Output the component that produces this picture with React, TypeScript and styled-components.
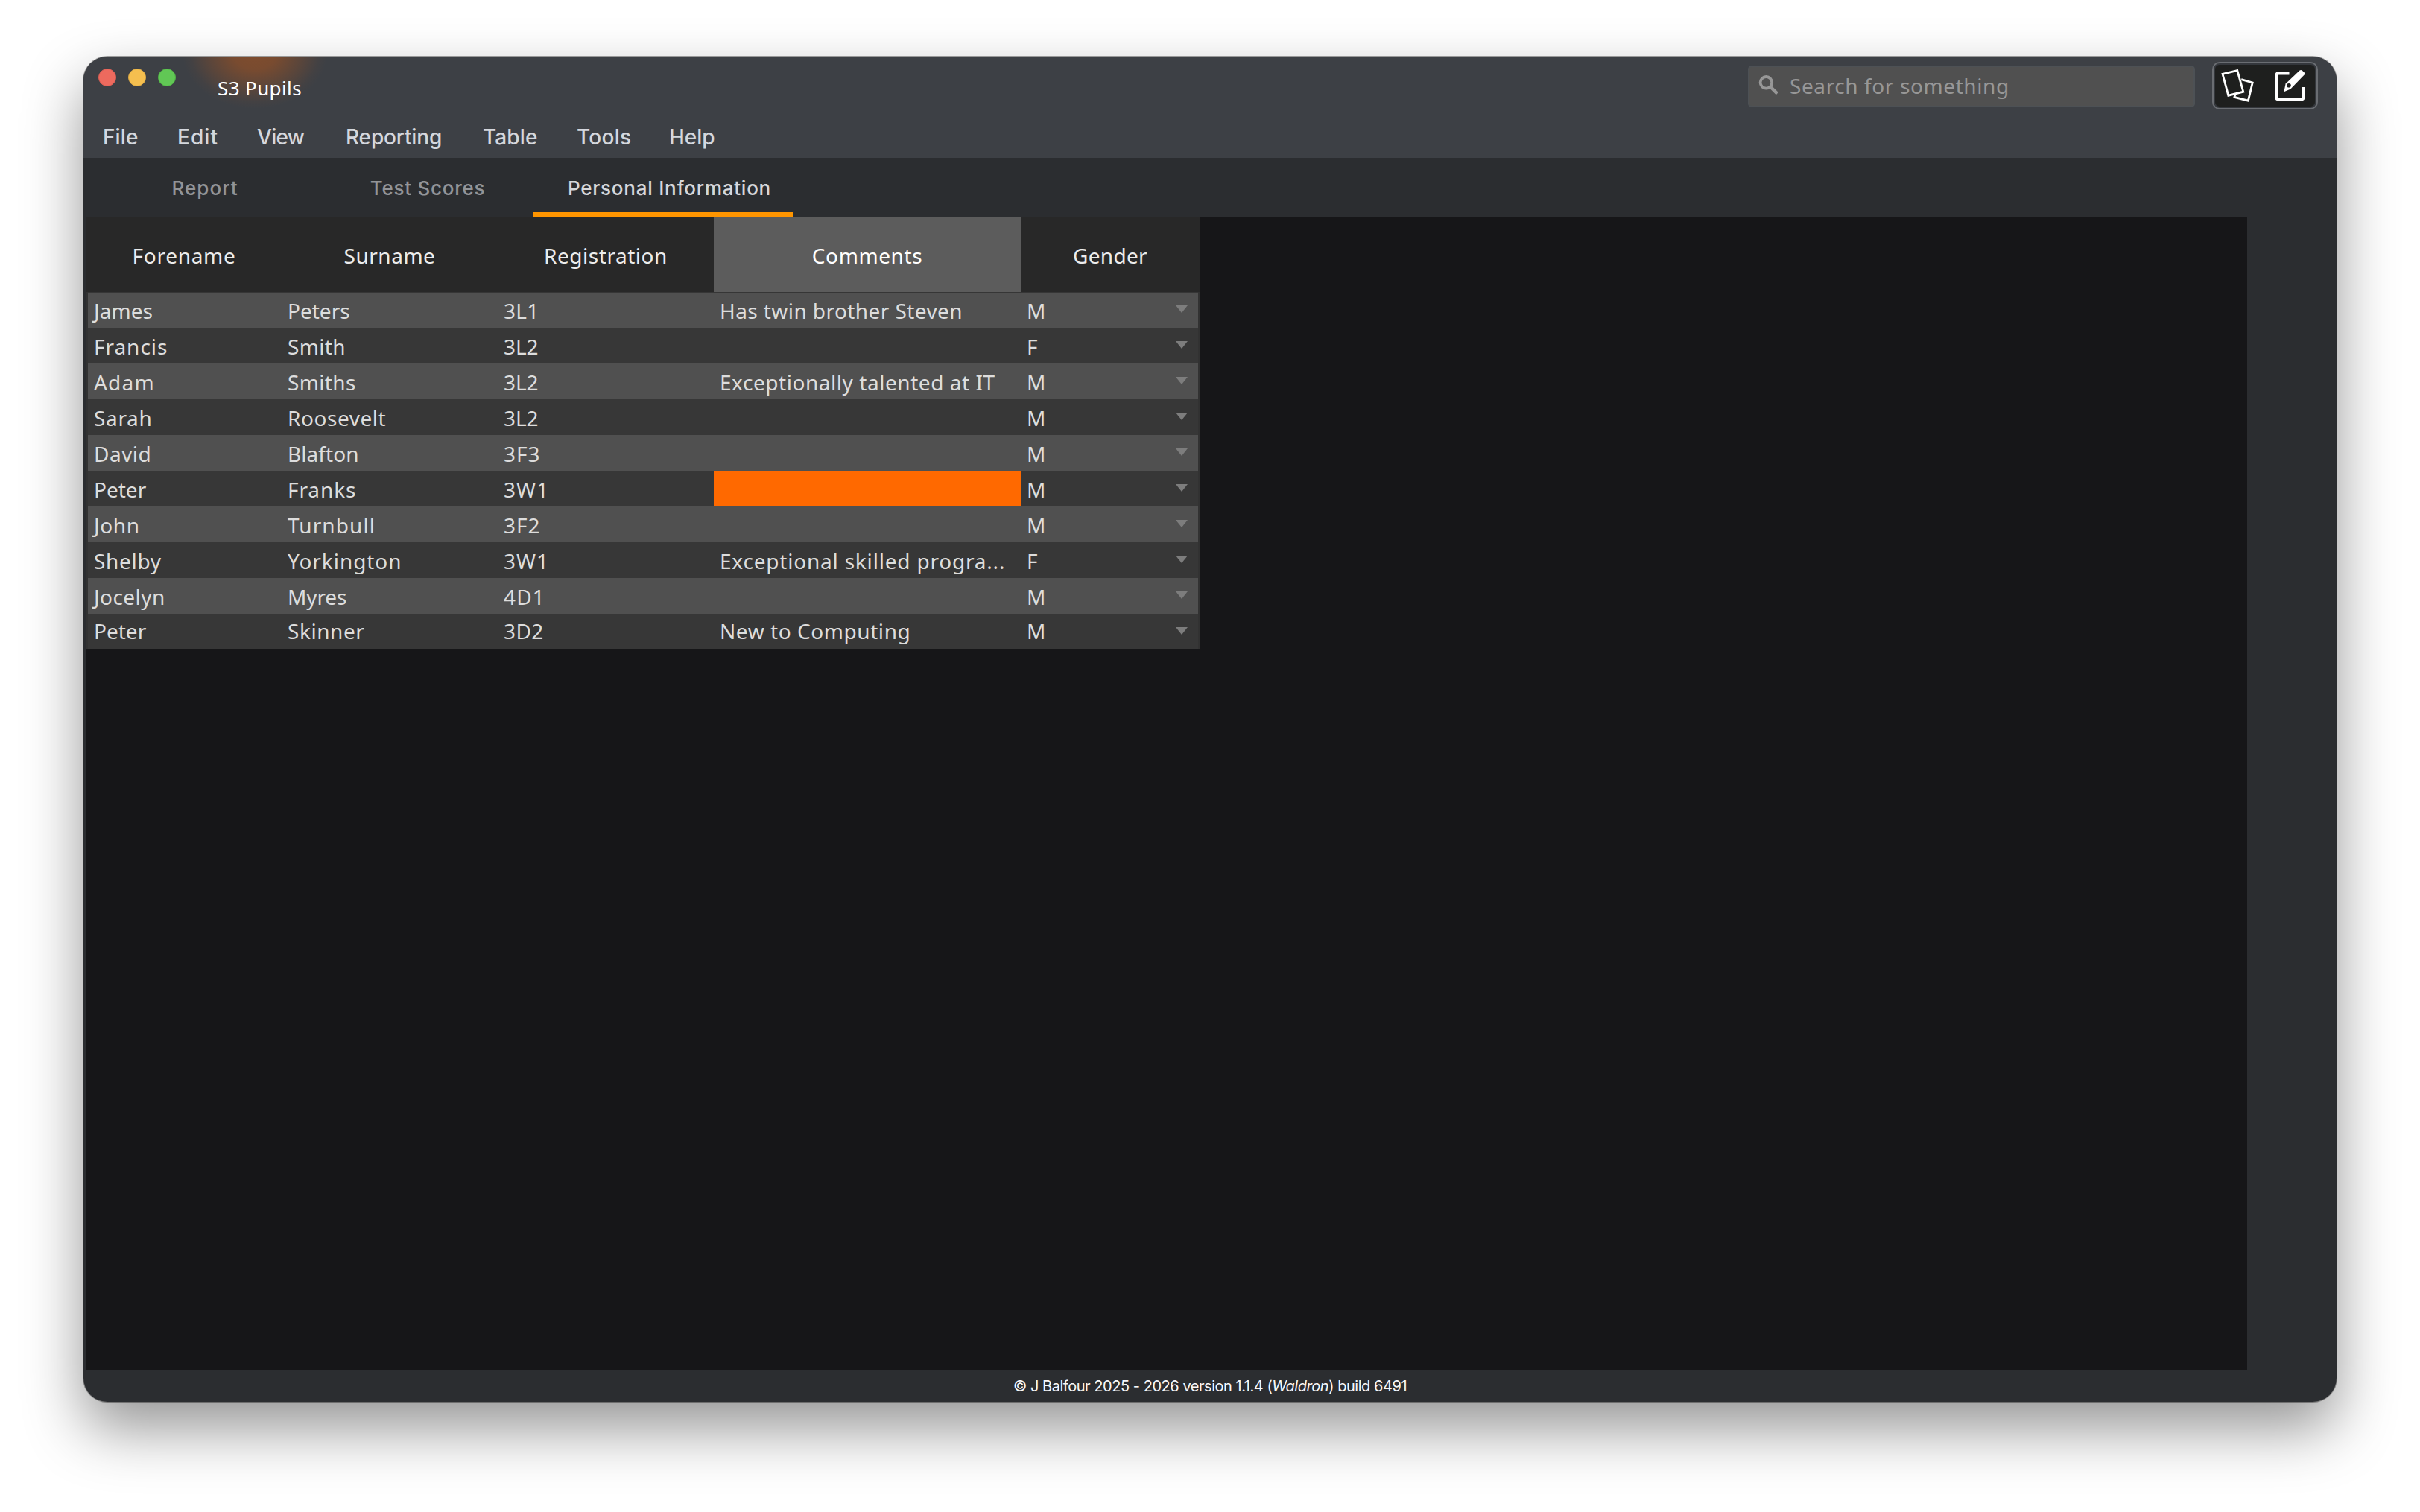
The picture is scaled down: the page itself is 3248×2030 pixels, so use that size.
import React from 'react';
import styled, { createGlobalStyle } from 'styled-components';

const humanist = '"Noto Sans", "Open Sans", sans-serif';
const grotesque = 'Inter, "Liberation Sans", sans-serif';

const GlobalStyle = createGlobalStyle`
  *, *::before, *::after { box-sizing: border-box; }
  body { margin: 0; background: #fff; }
`;

const Desktop = styled.main`
  width: 3248px;
  height: 2030px;
  padding: 76px 112px 148px;
  overflow: hidden;
  background: #fff;
`;

const Window = styled.section`
  display: flex;
  flex-direction: column;
  height: 1806px;
  overflow: hidden;
  border-radius: 32px;
  background: #2b2d30;
  box-shadow: 0 0 0 1px rgba(0, 0, 0, 0.35), 0 36px 80px rgba(0, 0, 0, 0.42);
`;

const Header = styled.header`
  flex: none;
  height: 136px;
  background: radial-gradient(
      ellipse 98px 76px at 230px -6px,
      rgba(255, 100, 0, 0.34) 0%,
      rgba(255, 100, 0, 0.31) 30%,
      rgba(255, 100, 0, 0.14) 66%,
      rgba(255, 100, 0, 0.03) 88%,
      rgba(255, 100, 0, 0) 100%
    ),
    #3d4045;
`;

const TitleBar = styled.div`
  display: flex;
  align-items: flex-start;
  height: 80px;
  padding: 0 25px 0 20px;
`;

const Lights = styled.div`
  display: flex;
  gap: 16px;
  padding-top: 16px;
`;

const Light = styled.span<{ $color: string; $edge: string }>`
  width: 24px;
  height: 24px;
  border: 1px solid ${(p) => p.$edge};
  border-radius: 50%;
  background: ${(p) => p.$color};
`;

const Title = styled.h1`
  margin: 24px auto 0 56px;
  font: 400 26px/36px ${humanist};
  letter-spacing: 0.38px;
  white-space: nowrap;
  color: #fff;
`;

const Search = styled.div`
  display: flex;
  align-items: flex-start;
  width: 600px;
  height: 56px;
  margin: 12px 23px 0 0;
  border: 2px solid #4d5155;
  border-radius: 5px;
  background: #505050;
`;

const SearchIcon = styled.svg`
  flex: none;
  width: 28px;
  height: 28px;
  margin: 10px 14px 0 12px;
`;

const Placeholder = styled.span`
  margin-top: 6px;
  font: 400 28px/38px ${humanist};
  letter-spacing: 0.6px;
  white-space: nowrap;
  color: #979797;
`;

const ToolGroup = styled.div`
  display: flex;
  width: 142px;
  height: 64px;
  margin-top: 7px;
  padding: 2px;
  border: 2px solid #6a6d72;
  border-radius: 10px;
  background: #34373c;
`;

const ToolFace = styled.div`
  display: flex;
  flex: 1;
  align-items: center;
  justify-content: space-between;
  padding: 0 13px 0 8px;
  border-radius: 6px;
  background: #1e1f1e;
`;

const ToolIcon = styled.svg<{ $w: number }>`
  width: ${(p) => p.$w}px;
  height: 44px;
`;

const MenuBar = styled.nav`
  display: grid;
  grid-template-columns: 100px 107px 119px 184px 126px 124px auto;
  height: 56px;
  padding-left: 26px;
`;

const MenuItem = styled.span<{ $track: number }>`
  font: 500 28px/56px ${grotesque};
  letter-spacing: ${(p) => p.$track}px;
  white-space: nowrap;
  color: #d4d7dd;
`;

const TabBar = styled.nav`
  display: grid;
  flex: none;
  grid-template-columns: 314px 284px 348px;
  height: 80px;
  padding-left: 6px;
`;

const Tab = styled.span<{ $active?: boolean; $track: number }>`
  height: 80px;
  padding: ${(p) => (p.$active ? '0 13px 0 30px' : '0')};
  text-align: center;
  font: 500 26px/81px ${grotesque};
  letter-spacing: ${(p) => p.$track}px;
  white-space: nowrap;
  color: ${(p) => (p.$active ? '#d6d7da' : '#929498')};
  box-shadow: ${(p) => (p.$active ? 'inset 0 -8px 0 #ff9500' : 'none')};
`;

const Content = styled.div`
  flex: 1;
  min-height: 0;
  margin: 0 120px 0 4px;
  background: #161618;
`;

const Table = styled.div`
  width: 1494px;
  background: #323232;
`;

const HeadRow = styled.div`
  display: grid;
  grid-template-columns: 262px 290px 290px 412px 240px;
  height: 100px;
  background: #282828;
`;

const HeadCell = styled.div<{ $selected?: boolean; $track: number }>`
  height: 100px;
  font: 400 28px/102px ${humanist};
  letter-spacing: ${(p) => p.$track}px;
  text-align: center;
  color: ${(p) => (p.$selected ? '#fff' : '#ececec')};
  background: ${(p) => (p.$selected ? '#5c5c5c' : 'transparent')};
`;

const Body = styled.div`
  padding: 0 2px;
`;

const Row = styled.div`
  display: grid;
  grid-template-columns: 260px 290px 290px 412px 238px;
  height: 48px;
  line-height: 50px;
  background: #373737;

  &:nth-child(odd) { background: #505050; }
  &:first-child { box-shadow: inset 0 2px 0 #363636; }
  &:last-child { line-height: 46px; }
`;

const Cell = styled.div<{ $marked?: boolean }>`
  display: flex;
  justify-content: space-between;
  height: 48px;
  padding: 0 14px 0 8px;
  font-family: ${humanist};
  font-size: 28px;
  white-space: nowrap;
  color: #dddddd;
  background: ${(p) => (p.$marked ? '#ff6900' : 'transparent')};
`;

const CellText = styled.span<{ $track: number }>`
  letter-spacing: ${(p) => p.$track}px;
`;

const Arrow = styled.i`
  width: 0;
  height: 0;
  margin-top: 18px;
  border: solid transparent;
  border-width: 10px 8px 0;
  border-top-color: #7d7d7d;
`;

const Footer = styled.footer`
  flex: none;
  height: 42px;
  font: 400 20px/42px ${grotesque};
  letter-spacing: -0.46px;
  text-align: center;
  white-space: nowrap;
  color: #f8f8f9;
`;

type Label = [string, number];

const menus: Label[] = [
  ['File', 0.1], ['Edit', 1.05], ['View', -0.7], ['Reporting', -0.15],
  ['Table', 0.1], ['Tools', 0.25], ['Help', 0],
];

const columns: Label[] = [
  ['Forename', 0.69], ['Surname', 0.51], ['Registration', 0.53], ['Comments', 0.59], ['Gender', 0.3],
];

const none: Label = ['', 0];

const pupils: Label[][] = [
  [['James', 0.07], ['Peters', 0], ['3L1', 0.3], ['Has twin brother Steven', 0.42], ['M', 0]],
  [['Francis', 0.96], ['Smith', 0.33], ['3L2', -0.1], none, ['F', 0]],
  [['Adam', 1.2], ['Smiths', 0.36], ['3L2', -0.1], ['Exceptionally talented at IT', 0.55], ['M', 0]],
  [['Sarah', 0.65], ['Roosevelt', 0.55], ['3L2', -0.1], none, ['M', 0]],
  [['David', 0.5], ['Blafton', 0.06], ['3F3', 1], none, ['M', 0]],
  [['Peter', 0], ['Franks', 0.9], ['3W1', 1], none, ['M', 0]],
  [['John', 0.6], ['Turnbull', 1.1], ['3F2', 1], none, ['M', 0]],
  [['Shelby', 0.7], ['Yorkington', 0.95], ['3W1', 1], ['Exceptional skilled progra...', 0.8], ['F', 0]],
  [['Jocelyn', 0.45], ['Myres', -0.12], ['4D1', 1.2], none, ['M', 0]],
  [['Peter', 0], ['Skinner', 0.55], ['3D2', 0.4], ['New to Computing', 0.56], ['M', 0]],
];

const SELECTED_ROW = 5;
const COMMENTS = 3;
const GENDER = 4;

export default function App() {
  return (
    <Desktop>
      <GlobalStyle />
      <Window>
        <Header>
          <TitleBar>
            <Lights>
              <Light $color="#ed6a5e" $edge="#dc5f55" />
              <Light $color="#f5bf4f" $edge="#dca944" />
              <Light $color="#61c755" $edge="#50b045" />
            </Lights>
            <Title>S3 Pupils</Title>
            <Search>
              <SearchIcon viewBox="0 0 28 28" fill="none" stroke="#979797">
                <circle cx="10.4" cy="10.8" r="7.8" strokeWidth="3.8" />
                <path d="M15.8 16.2 25.3 25.6" strokeWidth="4.4" />
              </SearchIcon>
              <Placeholder>Search for something</Placeholder>
            </Search>
            <ToolGroup>
              <ToolFace>
                <ToolIcon $w={44} viewBox="0 0 44 44" fill="none" stroke="#fff" strokeWidth="2.8">
                  <path d="M2 6.3 21.8 1.6 29.8 30.2 9.8 35.2Z" />
                  <path d="M27.2 13.6 42.2 18 36.4 42.2 17.9 37.4 19 33.4" />
                </ToolIcon>
                <ToolIcon $w={42} viewBox="0 0 42 44">
                  <path
                    d="M20.5 5.2H6.5Q3.4 5.2 3.4 8.3V37.2Q3.4 40.3 6.5 40.3H36.2Q39.3 40.3 39.3 37.2V24"
                    fill="none"
                    stroke="#fff"
                    strokeWidth="4.4"
                  />
                  <path
                    d="M13.4 30.3 15.6 19.6 34.6 1.5Q36.2.3 37.9 1.7L40.6 4.3Q42.2 6 40.7 7.6L22.3 26.6Z"
                    fill="#fff"
                  />
                  <circle cx="20" cy="21.8" r="2.8" fill="#1e1f1e" />
                </ToolIcon>
              </ToolFace>
            </ToolGroup>
          </TitleBar>
          <MenuBar>
            {menus.map(([name, track]) => (
              <MenuItem key={name} $track={track}>{name}</MenuItem>
            ))}
          </MenuBar>
        </Header>
        <TabBar>
          <Tab $track={1.05}>Report</Tab>
          <Tab $track={0.75}>Test Scores</Tab>
          <Tab $active $track={0.75}>Personal Information</Tab>
        </TabBar>
        <Content>
          <Table>
            <HeadRow>
              {columns.map(([name, track], i) => (
                <HeadCell key={name} $track={track} $selected={i === COMMENTS}>{name}</HeadCell>
              ))}
            </HeadRow>
            <Body>
              {pupils.map((pupil, r) => (
                <Row key={r}>
                  {pupil.map(([text, track], c) => (
                    <Cell key={c} $marked={r === SELECTED_ROW && c === COMMENTS}>
                      <CellText $track={track}>{text}</CellText>
                      {c === GENDER && <Arrow />}
                    </Cell>
                  ))}
                </Row>
              ))}
            </Body>
          </Table>
        </Content>
        <Footer>
          © J Balfour 2025 - 2026 version 1.1.4 (<em>Waldron</em>) build 6491
        </Footer>
      </Window>
    </Desktop>
  );
}
